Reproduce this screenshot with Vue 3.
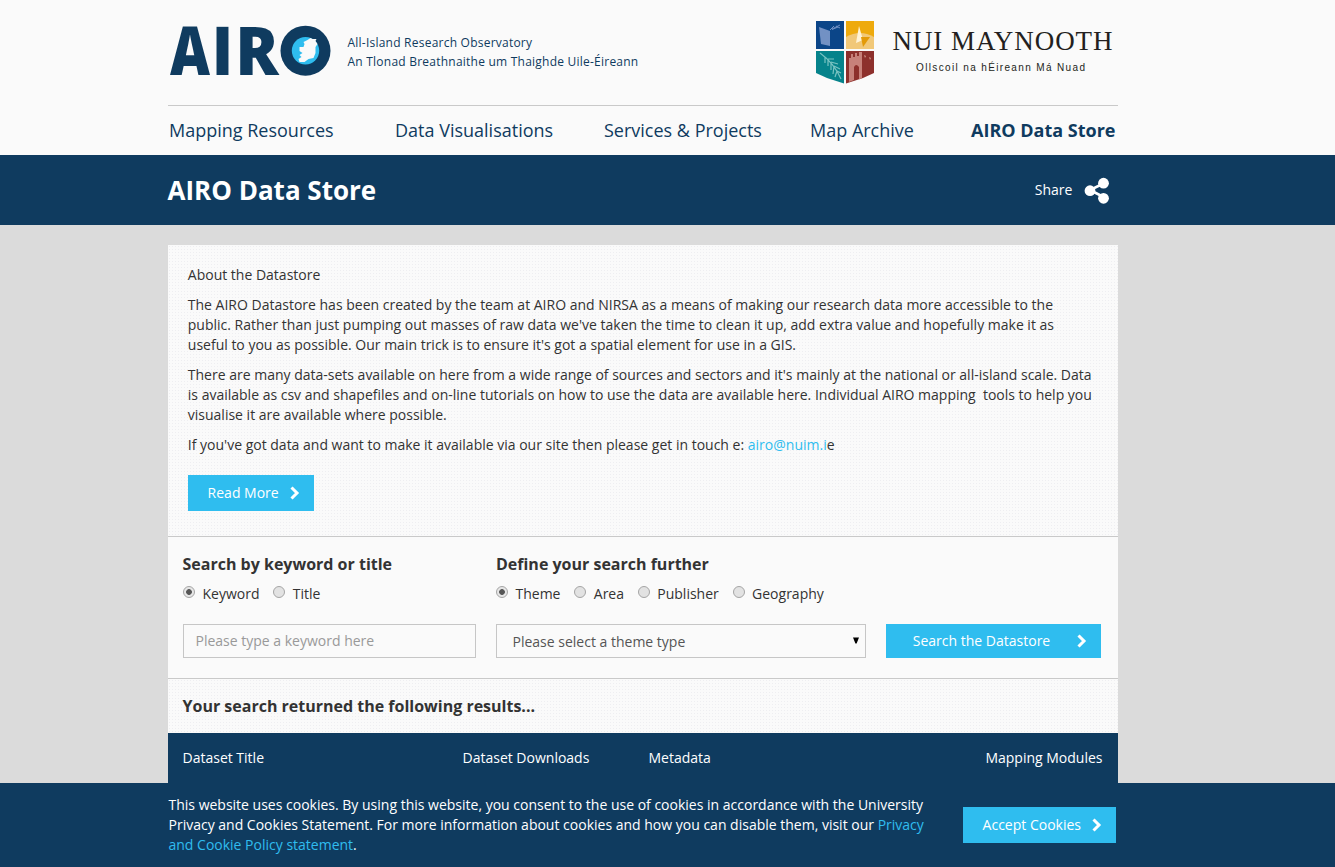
<script setup>
import { ref } from 'vue'

const nav = [
  { label: 'Mapping Resources', cls: 'n1' },
  { label: 'Data Visualisations', cls: 'n2' },
  { label: 'Services & Projects', cls: 'n3' },
  { label: 'Map Archive', cls: 'n4' },
  { label: 'AIRO Data Store', cls: 'n5' },
]
const searchBy = ref('Keyword')
const searchModes = ['Keyword', 'Title']
const define = ref('Theme')
const filters = ['Theme', 'Area', 'Publisher', 'Geography']
const keyword = ref('')
</script>

<template>
  <div class="page">
    <header class="top">
      <div class="brand">
        <svg class="airo" width="162" height="54" viewBox="0 0 162 54" role="img" aria-label="AIRO">
          <g class="airo-text">
            <text x="1" y="50.500" textLength="40" lengthAdjust="spacingAndGlyphs">A</text>
            <text x="42.800" y="50.500" textLength="21.500" lengthAdjust="spacingAndGlyphs">I</text>
            <text x="66.300" y="50.500" textLength="43.500" lengthAdjust="spacingAndGlyphs">R</text>
          </g>
          <circle cx="136.500" cy="26.700" r="25" fill="#0f3b5f" />
          <circle cx="136.500" cy="26.700" r="13.700" fill="#2fbdef" />
          <path d="M138.500 16l3-2 2 1 4 0-1 2 2 3-2 3 0 6-2 5-5 1-4 3-5 0-1-3 3-2-2-2 3-2-3-2 0-4 4 0 1-3-1-2z" fill="#fafafa" />
        </svg>
        <div class="tagline">
          <p>All-Island Research Observatory</p>
          <p>An Tlonad Breathnaithe um Thaighde Uile-Éireann</p>
        </div>
        <svg class="nui" width="300" height="64" viewBox="0 0 300 64">
          <path d="M1 0h28v28H1z" fill="#0b4588" />
          <path d="M31 0h28v28H31z" fill="#eeaa0d" />
          <path d="M1 30h28v32.500L12 57 1 52z" fill="#06838b" />
          <path d="M31 30h28v22l-11 5-17 5.500z" fill="#8d302c" />
          <path d="M4 6l11 4v15L6 23z" fill="#7291c4" />
          <path d="M15 9l4-4M17 8l8-4M17 8.500l6-2.500M21 5l4 2" stroke="#7291c4" stroke-width="1" fill="none" />
          <path d="M31 16q14-8 28 0v12H31z" fill="#f1c878" />
          <path d="M44 5l4 14-7 3z" fill="#fff3d6" />
          <path d="M46 16l9 0-7 10z" fill="#e39a08" />
          <path d="M5 32Q19 42 26 58M10 36l0 6M13 38l0 7M16 41l0 8M19 45l-1 8M22 50l-2 6M13 38l6 0M16 41l7 2M19 45l6 3M22 50l4 2" stroke="#79c3c2" stroke-width="1.200" fill="none" />
          <path d="M34 61V37h2v-4h2v3h2v-4h2v3h2v-4h3v26l-3 1.500V46q-3-4-5 0v13z" fill="#c7817a" />
          <path d="M49 34l2 1-1 2zM54 36l2 1-1 2z" fill="#d2988b" />
          <text class="nui-name" x="77.500" y="29" textLength="220">NUI MAYNOOTH</text>
          <text class="nui-sub" x="101" y="49.500" textLength="169">Ollscoil na hÉireann Má Nuad</text>
        </svg>
      </div>
      <nav class="nav">
        <a v-for="n in nav" :key="n.label" :class="n.cls">{{ n.label }}</a>
      </nav>
    </header>

    <div class="titlebar">
      <div class="wrap titlerow">
        <h1>AIRO Data Store</h1>
        <div class="share">
          <span>Share</span>
          <svg width="26" height="28" viewBox="0 0 26 28">
            <path d="M19.500 7.500L6 14l13.500 7" stroke="#fff" stroke-width="2.600" fill="none" />
            <circle cx="19.500" cy="7.200" r="5.400" fill="#fff" />
            <circle cx="6" cy="14.700" r="5.400" fill="#fff" />
            <circle cx="19.500" cy="22.300" r="5.400" fill="#fff" />
          </svg>
        </div>
      </div>
    </div>

    <main class="wrap content">
      <section class="about grain">
        <p>About the Datastore</p>
        <p>The AIRO Datastore has been created by the team at AIRO and NIRSA as a means of making our research data more accessible to the<br>public. Rather than just pumping out masses of raw data we've taken the time to clean it up, add extra value and hopefully make it as<br>useful to you as possible. Our main trick is to ensure it's got a spatial element for use in a GIS.</p>
        <p>There are many data-sets available on here from a wide range of sources and sectors and it's mainly at the national or all-island scale. Data<br>is available as csv and shapefiles and on-line tutorials on how to use the data are available here. Individual AIRO mapping&nbsp; tools to help you<br>visualise it are available where possible.</p>
        <p>If you've got data and want to make it available via our site then please get in touch e: <a>airo@nuim.i</a>e</p>
        <button class="btn read">
          <span>Read More</span>
          <svg width="10" height="14" viewBox="0 0 10 14"><path d="M1.500 1.500L7 7l-5.500 5.500" /></svg>
        </button>
      </section>

      <section class="search">
        <div class="col-a">
          <h2>Search by keyword or title</h2>
          <div class="radios">
            <label v-for="m in searchModes" :key="m"><input v-model="searchBy" type="radio" :value="m"><span>{{ m }}</span></label>
          </div>
          <input v-model="keyword" class="field" type="text" placeholder="Please type a keyword here">
        </div>
        <div class="col-b">
          <h2>Define your search further</h2>
          <div class="radios">
            <label v-for="f in filters" :key="f"><input v-model="define" type="radio" :value="f"><span>{{ f }}</span></label>
          </div>
          <div class="field select">
            <span>Please select a theme type</span>
            <svg width="6" height="7" viewBox="0 0 6 7"><path d="M0 .5h6L3.600 6.500H2.400z" fill="#000" /></svg>
          </div>
        </div>
        <button class="btn go">
          <span>Search the Datastore</span>
          <svg width="10" height="14" viewBox="0 0 10 14"><path d="M1.500 1.500L7 7l-5.500 5.500" /></svg>
        </button>
      </section>

      <section class="results grain">
        <h2>Your search returned the following results...</h2>
      </section>
      <div class="thead">
        <span>Dataset Title</span>
        <span>Dataset Downloads</span>
        <span>Metadata</span>
        <span class="last">Mapping Modules</span>
      </div>
    </main>

    <footer class="cookies">
      <div class="wrap cookierow">
        <p>This website uses cookies. By using this website, you consent to the use of cookies in accordance with the University<br>Privacy and Cookies Statement. For more information about cookies and how you can disable them, visit our <a>Privacy<br>and Cookie Policy statement</a>.</p>
        <button class="btn accept">
          <span>Accept Cookies</span>
          <svg width="10" height="14" viewBox="0 0 10 14"><path d="M1.500 1.500L7 7l-5.500 5.500" /></svg>
        </button>
      </div>
    </footer>
  </div>
</template>

<style>
body { margin: 0; overflow: hidden; }
</style>

<style scoped>
* { box-sizing: border-box; }
p, h1, h2 { margin: 0; }
.page {
  width: 1335px;
  height: 867px;
  overflow: hidden;
  display: flex;
  flex-direction: column;
  background: #dbdbdb;
  color: #333;
  font: 14px/20px "Open Sans", sans-serif;
  white-space: nowrap;
}
.wrap { width: 950px; margin-left: 168px; }
.top { height: 155px; background: #fafafa; padding-left: 168px; flex: none; }
.brand { width: 950px; height: 106px; border-bottom: 1px solid #c9c9c9; display: flex; align-items: flex-start; }
.airo { margin: 24px 0 0 1px; flex: none; overflow: visible; }
.airo-text { font: 800 68px "Open Sans", sans-serif; fill: #0f3b5f; }
.tagline { margin: 33px 0 0 16.500px; width: 299px; font-size: 12px; line-height: 19px; color: #0f3b5f; letter-spacing: 0.23px; }
.nui { margin: 21px 0 0 168.500px; flex: none; }
.nui-name { font: 27px "Liberation Serif", serif; fill: #231f20; }
.nui-sub { font: 10px "Liberation Sans", sans-serif; fill: #231f20; }
.nav { width: 950px; height: 49px; display: flex; color: #0f3b5f; font-size: 18px; line-height: 49px; }
.n1 { width: 226px; padding-left: 1px; }
.n2 { width: 210px; padding-left: 1px; }
.n3 { width: 206px; }
.n4 { width: 161px; }
.n5 { font-weight: 700; }
.titlebar { height: 70px; background: #0f3b5f; flex: none; color: #fff; }
.titlerow { display: flex; height: 70px; align-items: center; justify-content: space-between; }
h1 { font-size: 26px; line-height: 36px; font-weight: 700; margin-left: -0.5px; }
.share { display: flex; align-items: center; gap: 12px; padding-right: 7.600px; }
.content { height: 538px; margin-top: 20px; flex: none; background: #fafafa; }
.grain {
  background-color: #fafafa;
  background-image: radial-gradient(circle at 1.5px 1.5px, #eeeef1 0.5px, transparent 0.8px);
  background-size: 3px 3px;
}
.about { height: 291px; padding: 20px 20px 0 19.800px; }
.about p { margin-bottom: 10px; }
a { color: inherit; }
.about a, .cookies a { color: #2fbdef; }
.btn {
  border: 0;
  background: #2fbdef;
  color: #fff;
  font: 14px/20px "Open Sans", sans-serif;
  display: flex;
  align-items: center;
  padding: 0;
  flex: none;
}
.btn path { fill: none; stroke: #fff; stroke-width: 3; }
.read { width: 126px; height: 36px; margin-top: 20px; padding-left: 19.800px; gap: 11px; }
.search { height: 143px; border-top: 1px solid #c9c9c9; border-bottom: 1px solid #c9c9c9; display: flex; gap: 20px; padding: 17px 0 0 15px; }
h2 { font-size: 16px; line-height: 20px; font-weight: 700; margin-left: -0.5px; }
.col-a { width: 293px; }
.col-b { width: 370px; }
.col-b h2 { margin-left: 0; }
.radios { display: flex; height: 20px; margin: 10px 0 20px; gap: 13.800px; }
.radios label { display: flex; align-items: center; gap: 7.500px; }
.radios input {
  appearance: none;
  width: 12px;
  height: 12px;
  margin: -4px 0 0;
  border: 1px solid #a5a5a5;
  border-radius: 50%;
  background: #e2e2e2;
}
.radios input:checked { background: radial-gradient(circle, #555 2.500px, #e6e6e6 3.200px); }
.field { width: 100%; height: 34px; border: 1px solid #c6c6c6; background: #fafafa; font: 14px/20px "Open Sans", sans-serif; padding: 0 11.500px 2px; display: block; color: #333; }
.field::placeholder { color: #999; opacity: 1; }
.select { display: flex; align-items: center; justify-content: space-between; padding: 2px 6px 0 15.500px; color: #555; }
.select svg { margin-top: -3px; }
.go { width: 215px; height: 34px; margin-top: 70px; padding-left: 26.800px; gap: 27px; }
.results { height: 54px; padding: 17px 0 0 15px; }
.thead { height: 50px; background: #0f3b5f; color: #fff; display: grid; grid-template-columns: 280px 186px 200px 1fr; padding: 15px 15.500px 0 14.500px; }
.last { text-align: right; }
.cookies { height: 84px; background: #0f3b5f; color: #fff; flex: none; }
.cookierow { display: flex; padding-top: 12px; }
.cookierow p { width: 795px; padding-left: 0.5px; }
.accept { width: 153px; height: 36px; margin-top: 12px; padding-left: 19.600px; gap: 11px; }
</style>
